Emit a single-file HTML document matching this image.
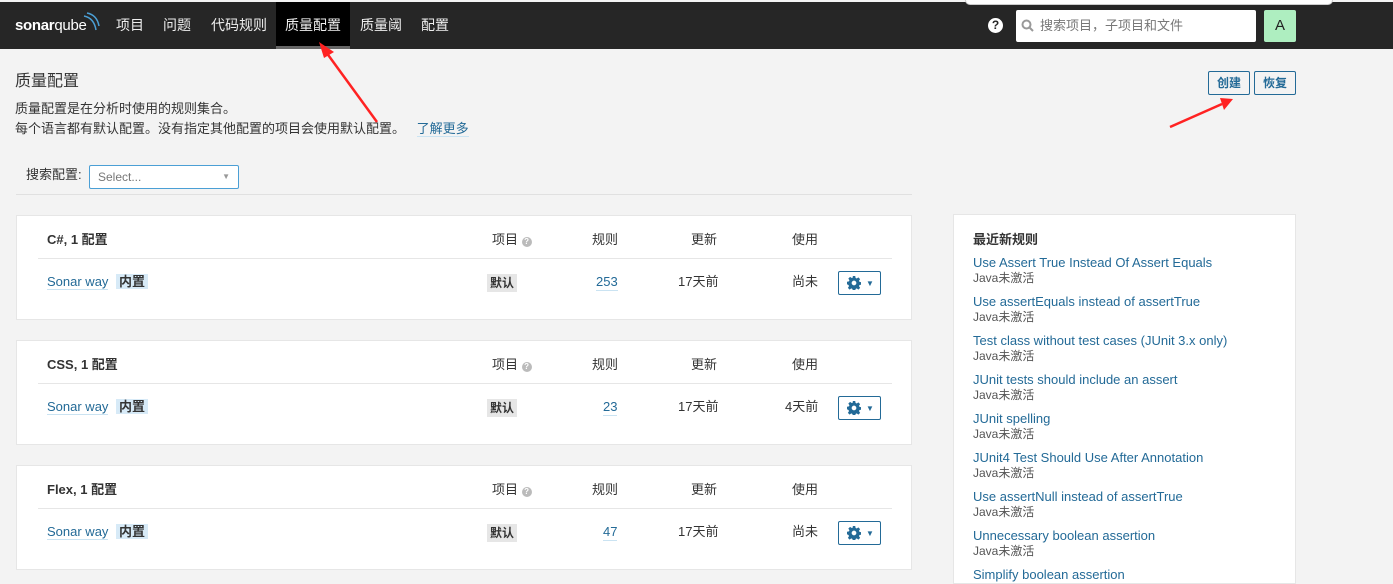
<!DOCTYPE html>
<html><head><meta charset="utf-8"><style>
*{margin:0;padding:0;box-sizing:border-box}
body{width:1393px;height:574px;overflow:hidden;background:#f3f3f3;font-family:"Liberation Sans","Noto Sans CJK SC",sans-serif;font-size:13px;color:#333;position:relative;line-height:16px}
.a{position:absolute;white-space:nowrap}
.nav{position:absolute;left:0;top:2px;width:1393px;height:47px;background:#262626}
.ni{position:absolute;top:0;height:47px;line-height:46px;color:#eee;font-size:14px}
.lnk{color:#236a97}
.card{position:absolute;left:16px;width:896px;height:105px;background:#fff;border:1px solid #e6e6e6}
.h{font-weight:bold;color:#333}
.gear{position:absolute;left:821px;width:43px;height:24px;border:1px solid #236a97;border-radius:2px}
.tag{background:#d7eaf7;padding:0 3px;color:#333;font-weight:bold}
.def{background:#e6e6e6;padding:1px 3px;font-weight:bold;font-size:12px}
.u{border-bottom:1px solid #cae3f2}
.j{color:#555;font-size:12px;margin-bottom:8px;line-height:15px}
</style></head><body>
<div class="a" style="left:965px;top:0;width:368px;height:5px;background:#fff;border-radius:0 0 8px 8px;z-index:3;border:1px solid #ccc;border-top:none"></div>
<div class="nav">
<div class="a" style="left:15px;top:16px;color:#fff;font-weight:bold;font-size:15px;letter-spacing:-0.3px">sonar<span style="font-weight:normal">qube</span></div>
<svg class="a" style="left:82px;top:10px" width="18" height="22"><path d="M2 4 Q12 6 14 18 M5 1 Q15 3 17 14" stroke="#4b9fd5" stroke-width="1.5" fill="none"/></svg>
<div class="ni" style="left:116px">项目</div>
<div class="ni" style="left:163px">问题</div>
<div class="ni" style="left:211px">代码规则</div>
<div class="ni" style="left:276px;width:74px;background:#000;text-align:center;border-bottom:3px solid #666">质量配置</div>
<div class="ni" style="left:360px">质量阈</div>
<div class="ni" style="left:421px">配置</div>
<div class="a" style="left:988px;top:16px;width:15px;height:15px;border-radius:50%;background:#fff;color:#262626;font-weight:bold;font-size:12px;text-align:center;line-height:15px">?</div>
<div class="a" style="left:1016px;top:8px;width:240px;height:32px;background:#fff;border-radius:2px"></div>
<svg class="a" style="left:1021px;top:17px" width="14" height="14"><circle cx="5.5" cy="5.5" r="4" stroke="#999" stroke-width="2" fill="none"/><path d="M8.5 8.5 L12 12" stroke="#999" stroke-width="2"/></svg>
<div class="a" style="left:1040px;top:16px;color:#777;font-size:13px">搜索项目，子项目和文件</div>
<div class="a" style="left:1264px;top:8px;width:32px;height:32px;background:#aeeec0;border-radius:2px;text-align:center;line-height:32px;font-size:15px;color:#222">A</div>
</div>
<div class="a" style="left:15px;top:72px;font-size:16px;line-height:20px">质量配置</div>
<div class="a" style="left:15px;top:101px">质量配置是在分析时使用的规则集合。</div>
<div class="a" style="left:15px;top:121px">每个语言都有默认配置。没有指定其他配置的项目会使用默认配置。 <span class="lnk u" style="margin-left:8px">了解更多</span></div>
<div class="a" style="left:1208px;top:71px;width:42px;height:24px;border:1px solid #236a97;border-radius:2px;color:#236a97;font-weight:bold;text-align:center;line-height:22px;font-size:12px">创建</div>
<div class="a" style="left:1254px;top:71px;width:42px;height:24px;border:1px solid #236a97;border-radius:2px;color:#236a97;font-weight:bold;text-align:center;line-height:22px;font-size:12px">恢复</div>
<div class="a" style="left:26px;top:167px">搜索配置:</div>
<div class="a" style="left:89px;top:165px;width:150px;height:24px;background:#fff;border:1px solid #4b9fd5;border-radius:2px;color:#777;padding-left:8px;line-height:22px;font-size:12px">Select...<span style="position:absolute;right:8px;top:0;font-size:8px;color:#999">▼</span></div>
<div class="a" style="left:16px;top:194px;width:896px;height:1px;background:#e0e0e0"></div>

<svg width="0" height="0" style="position:absolute"><defs><symbol id="g" viewBox="0 0 16 16"><path fill="#236a97" d="M6.6 0h2.8l.4 2.2 1.300.6 1.9-1.3 2 2-1.3 1.9.6 1.3 2.2.4v2.8l-2.2.4-.6 1.3 1.3 1.9-2 2-1.9-1.3-1.3.6-.4 2.2H6.6l-.4-2.2-1.3-.6-1.9 1.3-2-2 1.3-1.9-.6-1.3L0 9.4V6.6l2.2-.4.6-1.3-1.3-1.9 2-2 1.9 1.3 1.3-.6zM8 5.3a2.7 2.7 0 100 5.4 2.7 2.7 0 000-5.4z"/></symbol></defs></svg>

<div class="card" style="top:215px">
<div class="a h" style="left:30px;top:16px">C#, 1 配置</div>
<div class="a" style="left:475px;top:16px">项目 <span style="display:inline-block;width:10px;height:10px;border-radius:50%;background:#bbb;color:#fff;font-size:8px;text-align:center;line-height:10px;font-weight:bold">?</span></div>
<div class="a" style="left:575px;top:16px">规则</div><div class="a" style="left:674px;top:16px">更新</div><div class="a" style="left:775px;top:16px">使用</div>
<div class="a" style="left:21px;top:42px;width:854px;height:1px;background:#e6e6e6"></div>
<div class="a" style="left:30px;top:58px"><span class="lnk u">Sonar way</span> <span class="tag" style="margin-left:4px">内置</span></div>
<div class="a def" style="left:470px;top:58px">默认</div>
<div class="a lnk u" style="left:579px;top:58px">253</div>
<div class="a" style="left:661px;top:58px">17天前</div>
<div class="a" style="left:775px;top:58px">尚未</div>
<div class="gear" style="top:55px"><svg class="a" style="left:8px;top:4px" width="14" height="14"><use href="#g"/></svg><span class="a" style="left:27px;top:4px;color:#236a97;font-size:8px">▼</span></div>
</div>

<div class="card" style="top:340px">
<div class="a h" style="left:30px;top:16px">CSS, 1 配置</div>
<div class="a" style="left:475px;top:16px">项目 <span style="display:inline-block;width:10px;height:10px;border-radius:50%;background:#bbb;color:#fff;font-size:8px;text-align:center;line-height:10px;font-weight:bold">?</span></div>
<div class="a" style="left:575px;top:16px">规则</div><div class="a" style="left:674px;top:16px">更新</div><div class="a" style="left:775px;top:16px">使用</div>
<div class="a" style="left:21px;top:42px;width:854px;height:1px;background:#e6e6e6"></div>
<div class="a" style="left:30px;top:58px"><span class="lnk u">Sonar way</span> <span class="tag" style="margin-left:4px">内置</span></div>
<div class="a def" style="left:470px;top:58px">默认</div>
<div class="a lnk u" style="left:586px;top:58px">23</div>
<div class="a" style="left:661px;top:58px">17天前</div>
<div class="a" style="left:768px;top:58px">4天前</div>
<div class="gear" style="top:55px"><svg class="a" style="left:8px;top:4px" width="14" height="14"><use href="#g"/></svg><span class="a" style="left:27px;top:4px;color:#236a97;font-size:8px">▼</span></div>
</div>

<div class="card" style="top:465px">
<div class="a h" style="left:30px;top:16px">Flex, 1 配置</div>
<div class="a" style="left:475px;top:16px">项目 <span style="display:inline-block;width:10px;height:10px;border-radius:50%;background:#bbb;color:#fff;font-size:8px;text-align:center;line-height:10px;font-weight:bold">?</span></div>
<div class="a" style="left:575px;top:16px">规则</div><div class="a" style="left:674px;top:16px">更新</div><div class="a" style="left:775px;top:16px">使用</div>
<div class="a" style="left:21px;top:42px;width:854px;height:1px;background:#e6e6e6"></div>
<div class="a" style="left:30px;top:58px"><span class="lnk u">Sonar way</span> <span class="tag" style="margin-left:4px">内置</span></div>
<div class="a def" style="left:470px;top:58px">默认</div>
<div class="a lnk u" style="left:586px;top:58px">47</div>
<div class="a" style="left:661px;top:58px">17天前</div>
<div class="a" style="left:775px;top:58px">尚未</div>
<div class="gear" style="top:55px"><svg class="a" style="left:8px;top:4px" width="14" height="14"><use href="#g"/></svg><span class="a" style="left:27px;top:4px;color:#236a97;font-size:8px">▼</span></div>
</div>

<div class="a" style="left:953px;top:214px;width:343px;height:370px;background:#fff;border:1px solid #e6e6e6">
<div class="a h" style="left:19px;top:17px">最近新规则</div>
<div style="position:absolute;left:19px;top:40px;line-height:16px;white-space:nowrap">
<div class="lnk">Use Assert True Instead Of Assert Equals</div><div class="j">Java未激活</div>
<div class="lnk">Use assertEquals instead of assertTrue</div><div class="j">Java未激活</div>
<div class="lnk">Test class without test cases (JUnit 3.x only)</div><div class="j">Java未激活</div>
<div class="lnk">JUnit tests should include an assert</div><div class="j">Java未激活</div>
<div class="lnk">JUnit spelling</div><div class="j">Java未激活</div>
<div class="lnk">JUnit4 Test Should Use After Annotation</div><div class="j">Java未激活</div>
<div class="lnk">Use assertNull instead of assertTrue</div><div class="j">Java未激活</div>
<div class="lnk">Unnecessary boolean assertion</div><div class="j">Java未激活</div>
<div class="lnk">Simplify boolean assertion</div>
</div></div>

<svg class="a" style="left:0;top:0;z-index:5" width="1393" height="574">
<path d="M377 122 L326 52" stroke="#f22" stroke-width="2.5"/><path d="M319 42 L334 52 L324 58 Z" fill="#f22"/>
<path d="M1170 127 L1222 104" stroke="#f22" stroke-width="2.5"/><path d="M1233 99 L1220 98 L1224 110 Z" fill="#f22"/>
</svg>
</body></html>
